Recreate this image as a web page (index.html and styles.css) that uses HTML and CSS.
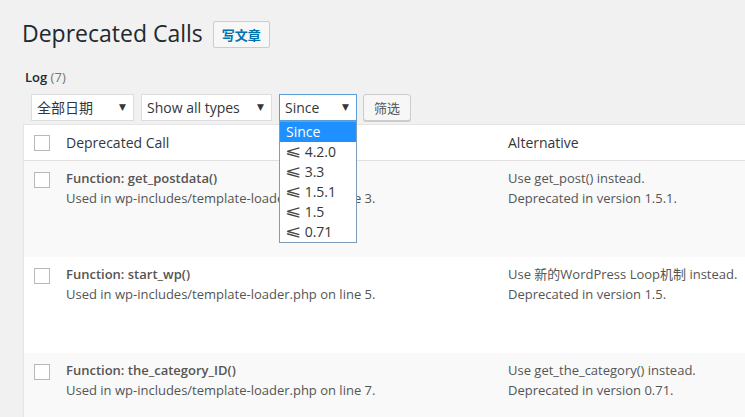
FILE: index.html
```html
<!DOCTYPE html>
<html lang="zh-CN">
<head>
<meta charset="utf-8">
<title>Deprecated Calls</title>
<link rel="stylesheet" href="styles.css">
</head>
<body>
<div class="wrap">
  <div class="heading">
    <h1 class="title">Deprecated Calls</h1>
    <a class="title-action">写文章</a>
  </div>
  <div class="subsub"><b>Log</b> <span class="count">(7)</span></div>
  <div class="filters">
    <div class="select sel-date">全部日期<span class="arrow">▼</span></div>
    <div class="select sel-type">Show all types<span class="arrow">▼</span></div>
    <div class="select sel-since focused">Since<span class="arrow">▼</span>
      <ul class="dropdown">
        <li class="active">Since</li>
        <li><span class="le">⩽</span> 4.2.0</li>
        <li><span class="le">⩽</span> 3.3</li>
        <li><span class="le">⩽</span> 1.5.1</li>
        <li><span class="le">⩽</span> 1.5</li>
        <li><span class="le">⩽</span> 0.71</li>
      </ul>
    </div>
    <div class="btn">筛选</div>
  </div>
  <div class="table">
    <div class="row head">
      <div class="cb"><span class="box"></span></div>
      <div class="col-call">Deprecated Call</div>
      <div class="col-alt">Alternative</div>
    </div>
    <div class="row alt">
      <div class="cb"><span class="box"></span></div>
      <div class="col-call"><strong>Function: get_postdata()</strong><br>Used in wp-includes/template-loader.php on line 3.</div>
      <div class="col-alt">Use get_post() instead.<br>Deprecated in version 1.5.1.</div>
    </div>
    <div class="row">
      <div class="cb"><span class="box"></span></div>
      <div class="col-call"><strong>Function: start_wp()</strong><br>Used in wp-includes/template-loader.php on line 5.</div>
      <div class="col-alt">Use 新的WordPress Loop机制 instead.<br>Deprecated in version 1.5.</div>
    </div>
    <div class="row alt">
      <div class="cb"><span class="box"></span></div>
      <div class="col-call"><strong>Function: the_category_ID()</strong><br>Used in wp-includes/template-loader.php on line 7.</div>
      <div class="col-alt">Use get_the_category() instead.<br>Deprecated in version 0.71.</div>
    </div>
  </div>
</div>
</body>
</html>
```

FILE: styles.css
```css
html, body {
  margin: 0;
  padding: 0;
  background: #f1f1f1;
  overflow: hidden;
}
body {
  font-family: "Open Sans", "Noto Sans CJK SC", sans-serif;
  color: #444;
  font-size: 13px;
  width: 745px;
  height: 417px;
}
.wrap {
  padding: 19px 0 0 22px;
}
.heading {
  display: flex;
  align-items: center;
  height: 30px;
}
.title {
  margin: 0;
  font-size: 23px;
  font-weight: 400;
  line-height: 29px;
  color: #23282d;
  position: relative;
  top: -1px;
}
.title-action {
  margin-left: 10px;
  height: 27px;
  box-sizing: border-box;
  display: flex;
  align-items: center;
  padding: 0 8px;
  border: 1px solid #ccc;
  border-radius: 2px;
  background: #f7f7f7;
  color: #0073aa;
  font-weight: 600;
  font-size: 13px;
  font-family: "Noto Sans CJK SC", sans-serif;
}
.subsub {
  margin: 19px 0 0 3px;
  line-height: 18px;
  font-size: 13px;
  color: #23282d;
}
.subsub b { font-weight: 600; }
.subsub .count { color: #72777c; }
.filters {
  display: flex;
  margin: 8px 0 0 9px;
  height: 28px;
}
.select {
  position: relative;
  box-sizing: border-box;
  height: 27px;
  border: 1px solid #ddd;
  background: #fff;
  font-size: 14px;
  color: #32373c;
  line-height: 25px;
  padding-left: 5px;
  margin-right: 7px;
}
.sel-date { width: 103px; font-family: "Noto Sans CJK SC", sans-serif; }
.sel-type { width: 131px; }
.sel-since { width: 78px; margin-right: 6px; }
.focused { border-color: #5b9dd9; }
.arrow {
  position: absolute;
  right: 7px;
  top: 0;
  font-size: 9px;
  color: #32373c;
  font-family: "DejaVu Sans", sans-serif;
}
.btn {
  box-sizing: border-box;
  height: 27px;
  width: 48px;
  border: 1px solid #ccc;
  border-radius: 3px;
  background: #f7f7f7;
  color: #555;
  font-size: 13px;
  line-height: 25px;
  text-align: center;
  font-family: "Noto Sans CJK SC", sans-serif;
  box-shadow: 0 1px 0 #ccc;
}
.dropdown {
  position: absolute;
  left: -1px;
  top: 26px;
  width: 78px;
  box-sizing: border-box;
  margin: 0;
  padding: 0;
  list-style: none;
  background: #fff;
  border: 1px solid #7f9db9;
  z-index: 5;
}
.dropdown li {
  height: 20px;
  line-height: 20px;
  padding-left: 6px;
  font-size: 14px;
  color: #32373c;
  white-space: nowrap;
}
.dropdown li.active {
  background: #1e90ff;
  color: #fff;
}
.le {
  font-family: "DejaVu Sans", sans-serif;
  font-size: 15px;
  font-weight: 300;
  display: inline-block;
  transform: scaleX(1.3);
  vertical-align: top;
  line-height: 19px;
  margin: 0 1px 0 1px;
  color: #444;
}
.table {
  margin-top: 2px;
  margin-left: 1px;
  width: 760px;
  border-left: 1px solid #e5e5e5;
  border-top: 1px solid #e5e5e5;
  background: #fff;
  box-shadow: 0 1px 1px rgba(0,0,0,.04);
}
.row {
  display: flex;
  height: 96px;
  box-sizing: border-box;
  padding-top: 8px;
  background: #fff;
  line-height: 19.5px;
  color: #555;
}
.row.alt { background: #f9f9f9; }
.row.head {
  height: 36px;
  padding-top: 0;
  align-items: center;
  border-bottom: 1px solid #e1e1e1;
  font-size: 14px;
  color: #32373c;
  background: #fff;
}
.cb {
  width: 42px;
  padding-left: 10px;
  box-sizing: border-box;
}
.box {
  display: block;
  width: 16px;
  height: 16px;
  box-sizing: border-box;
  border: 1px solid #b4b9be;
  background: #fff;
  margin-top: 3px;
}
.head .box { margin-top: 0; }
.col-call { width: 442px; }
.col-alt { flex: 1; }
.row strong { font-weight: 600; }
```
